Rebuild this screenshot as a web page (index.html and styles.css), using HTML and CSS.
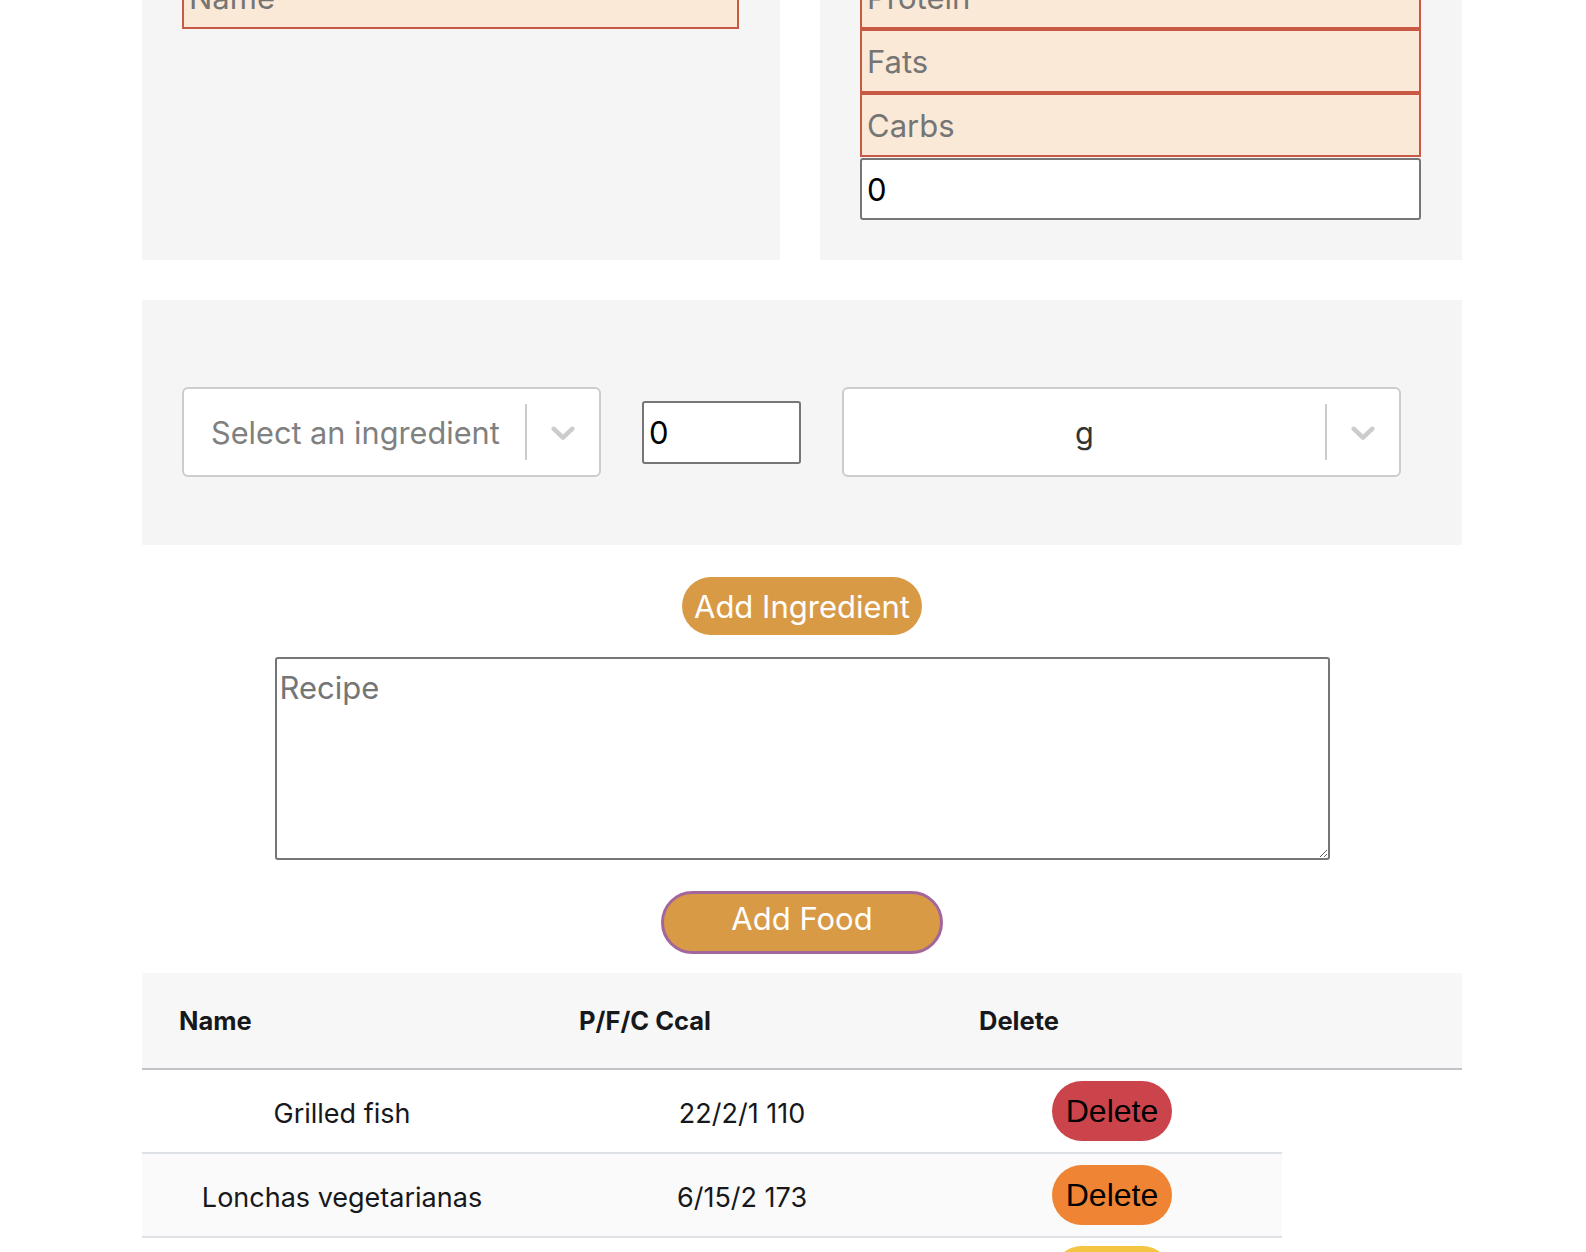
FILE: index.html
```html
<!DOCTYPE html>
<html lang="en">
<head>
<meta charset="utf-8">
<title>Foods</title>
<link rel="stylesheet" href="styles.css">
</head>
<body>
<main class="container">
  <section class="top-row">
    <div class="panel panel-left">
      <input class="field field-warn" type="text" placeholder="Name">
    </div>
    <div class="panel panel-right">
      <input class="field field-warn" type="text" placeholder="Protein">
      <input class="field field-warn" type="text" placeholder="Fats">
      <input class="field field-warn" type="text" placeholder="Carbs">
      <input class="field field-plain field-ccal" type="text" value="0">
    </div>
  </section>

  <section class="panel ingredient-row">
    <div class="select select-ingredient">
      <div class="select-value placeholder">Select an ingredient</div>
      <span class="select-sep"></span>
      <span class="select-arrow">
        <svg viewBox="0 0 20 20" width="40" height="40" aria-hidden="true"><path d="M4.516 7.548c0.436-0.446 1.043-0.481 1.576 0l3.908 3.747 3.908-3.747c0.533-0.481 1.141-0.446 1.574 0 0.436 0.445 0.408 1.197 0 1.615-0.406 0.418-4.695 4.502-4.695 4.502-0.217 0.223-0.502 0.335-0.787 0.335s-0.57-0.112-0.789-0.335c0 0-4.287-4.084-4.695-4.502s-0.436-1.17 0-1.615z" fill="#cccccc"/></svg>
      </span>
    </div>
    <input class="field field-plain qty" type="text" value="0">
    <div class="select select-unit">
      <div class="select-value centered">g</div>
      <span class="select-sep"></span>
      <span class="select-arrow">
        <svg viewBox="0 0 20 20" width="40" height="40" aria-hidden="true"><path d="M4.516 7.548c0.436-0.446 1.043-0.481 1.576 0l3.908 3.747 3.908-3.747c0.533-0.481 1.141-0.446 1.574 0 0.436 0.445 0.408 1.197 0 1.615-0.406 0.418-4.695 4.502-4.695 4.502-0.217 0.223-0.502 0.335-0.787 0.335s-0.57-0.112-0.789-0.335c0 0-4.287-4.084-4.695-4.502s-0.436-1.17 0-1.615z" fill="#cccccc"/></svg>
      </span>
    </div>
  </section>

  <div class="actions">
    <button class="btn btn-ingredient" type="button">Add Ingredient</button>
    <textarea class="recipe" placeholder="Recipe"></textarea>
    <button class="btn btn-food" type="button">Add Food</button>
  </div>

  <section class="food-table">
    <div class="thead">
      <div class="th">Name</div>
      <div class="th">P/F/C Ccal</div>
      <div class="th">Delete</div>
    </div>
    <div class="tbody">
      <div class="tr">
        <div class="td">Grilled fish</div>
        <div class="td">22/2/1 110</div>
        <div class="td td-action"><button class="del del-red" type="button">Delete</button></div>
      </div>
      <div class="tr tr-alt">
        <div class="td">Lonchas vegetarianas</div>
        <div class="td">6/15/2 173</div>
        <div class="td td-action"><button class="del del-orange" type="button">Delete</button></div>
      </div>
      <div class="tr">
        <div class="td"></div>
        <div class="td"></div>
        <div class="td td-action"><button class="del del-yellow" type="button" aria-label="Delete"></button></div>
      </div>
    </div>
  </section>
</main>
</body>
</html>
```

FILE: styles.css
```css
* {
  box-sizing: border-box;
}

html, body {
  margin: 0;
  padding: 0;
  background: #ffffff;
}

body {
  font-family: Inter, "Noto Sans", sans-serif;
  color: #212529;
  overflow: hidden;
}

.container {
  width: 1320px;
  margin-left: 142px;
}

.panel {
  background: #f5f5f5;
}

.top-row {
  display: grid;
  grid-template-columns: 638px 642px;
  column-gap: 40px;
  margin-top: -75px;
}

.panel-left,
.panel-right {
  display: flex;
  flex-direction: column;
  padding: 40px 41px 40px 40px;
}

.field {
  display: block;
  width: 100%;
  height: 64px;
  margin: 0;
  padding: 0 5px;
  font-family: Inter, "Noto Sans", sans-serif;
  font-size: 31px;
  color: #000;
  outline: none;
}

.field::placeholder {
  color: #757575;
}

.field-warn {
  background: #fbe9d7;
  border: 2px solid #c85a45;
  border-radius: 0;
}

.field-plain {
  background: #ffffff;
  border: 2px solid #767676;
  border-radius: 3px;
}

.field-ccal {
  margin-top: 1px;
  height: 62px;
}

.ingredient-row {
  display: flex;
  align-items: center;
  gap: 41px;
  margin-top: 40px;
  padding: 87px 61px 68px 40px;
}

.select {
  display: flex;
  align-items: center;
  height: 90px;
  background: #ffffff;
  border: 2px solid #cccccc;
  border-radius: 6px;
}

.select-ingredient {
  width: 419px;
}

.select-unit {
  width: 559px;
}

.select-value {
  flex: 1;
  padding-left: 27px;
  font-size: 30.7px;
  color: #333333;
  white-space: nowrap;
}

.select-value.placeholder {
  color: #808080;
}

.select-value.centered {
  text-align: center;
  padding-left: 0;
}

.select-sep {
  width: 2px;
  height: 56px;
  background: #cccccc;
}

.select-arrow {
  display: flex;
  padding: 0 16px;
}

.qty {
  width: 159px;
  height: 63px;
}

.actions {
  display: flex;
  flex-direction: column;
  align-items: center;
}

.btn {
  font-family: Inter, "Noto Sans", sans-serif;
  font-size: 31px;
  color: #ffffff;
  background: #d99a45;
  cursor: pointer;
}

.btn-ingredient {
  margin-top: 32px;
  width: 240px;
  height: 58px;
  padding: 0;
  border: none;
  border-radius: 29px;
}

.recipe {
  display: block;
  margin-top: 22px;
  width: 1055px;
  height: 203px;
  padding: 10px 3px;
  font-family: Inter, "Noto Sans", sans-serif;
  font-size: 31px;
  border: 2px solid #767676;
  border-radius: 3px;
  resize: both;
  outline: none;
}

.recipe::placeholder {
  color: #757575;
}

.btn-food {
  margin-top: 31px;
  width: 282px;
  height: 63px;
  padding: 0 0 9px;
  border: 3px solid #a3669c;
  border-radius: 32px;
}

.food-table {
  margin-top: 19px;
}

.thead {
  display: grid;
  grid-template-columns: 400px 400px 1fr;
  align-items: center;
  height: 97px;
  background: #f7f7f7;
  border-bottom: 2px solid #bfc2c6;
}

.th {
  padding-left: 37px;
  font-size: 25.5px;
  font-weight: 700;
  color: #16181b;
}

.tbody {
  width: 1140px;
}

.tr {
  display: grid;
  grid-template-columns: 400px 400px 340px;
  align-items: center;
  height: 84px;
  border-bottom: 2px solid #dee2e6;
  background: #ffffff;
}

.tr-alt {
  background: #fafafa;
}

.td {
  padding-top: 4px;
  text-align: center;
  font-size: 27px;
  color: #16181b;
}

.td-action {
  padding-top: 0;
}

.del {
  width: 120px;
  height: 60px;
  padding: 0;
  border: none;
  border-radius: 30px;
  font-family: "Liberation Sans", Arial, sans-serif;
  font-size: 32px;
  color: #000000;
  cursor: pointer;
}

.del-red {
  background: #cc444b;
}

.del-orange {
  background: #ee8434;
}

.del-yellow {
  background: #f4c542;
}
```
